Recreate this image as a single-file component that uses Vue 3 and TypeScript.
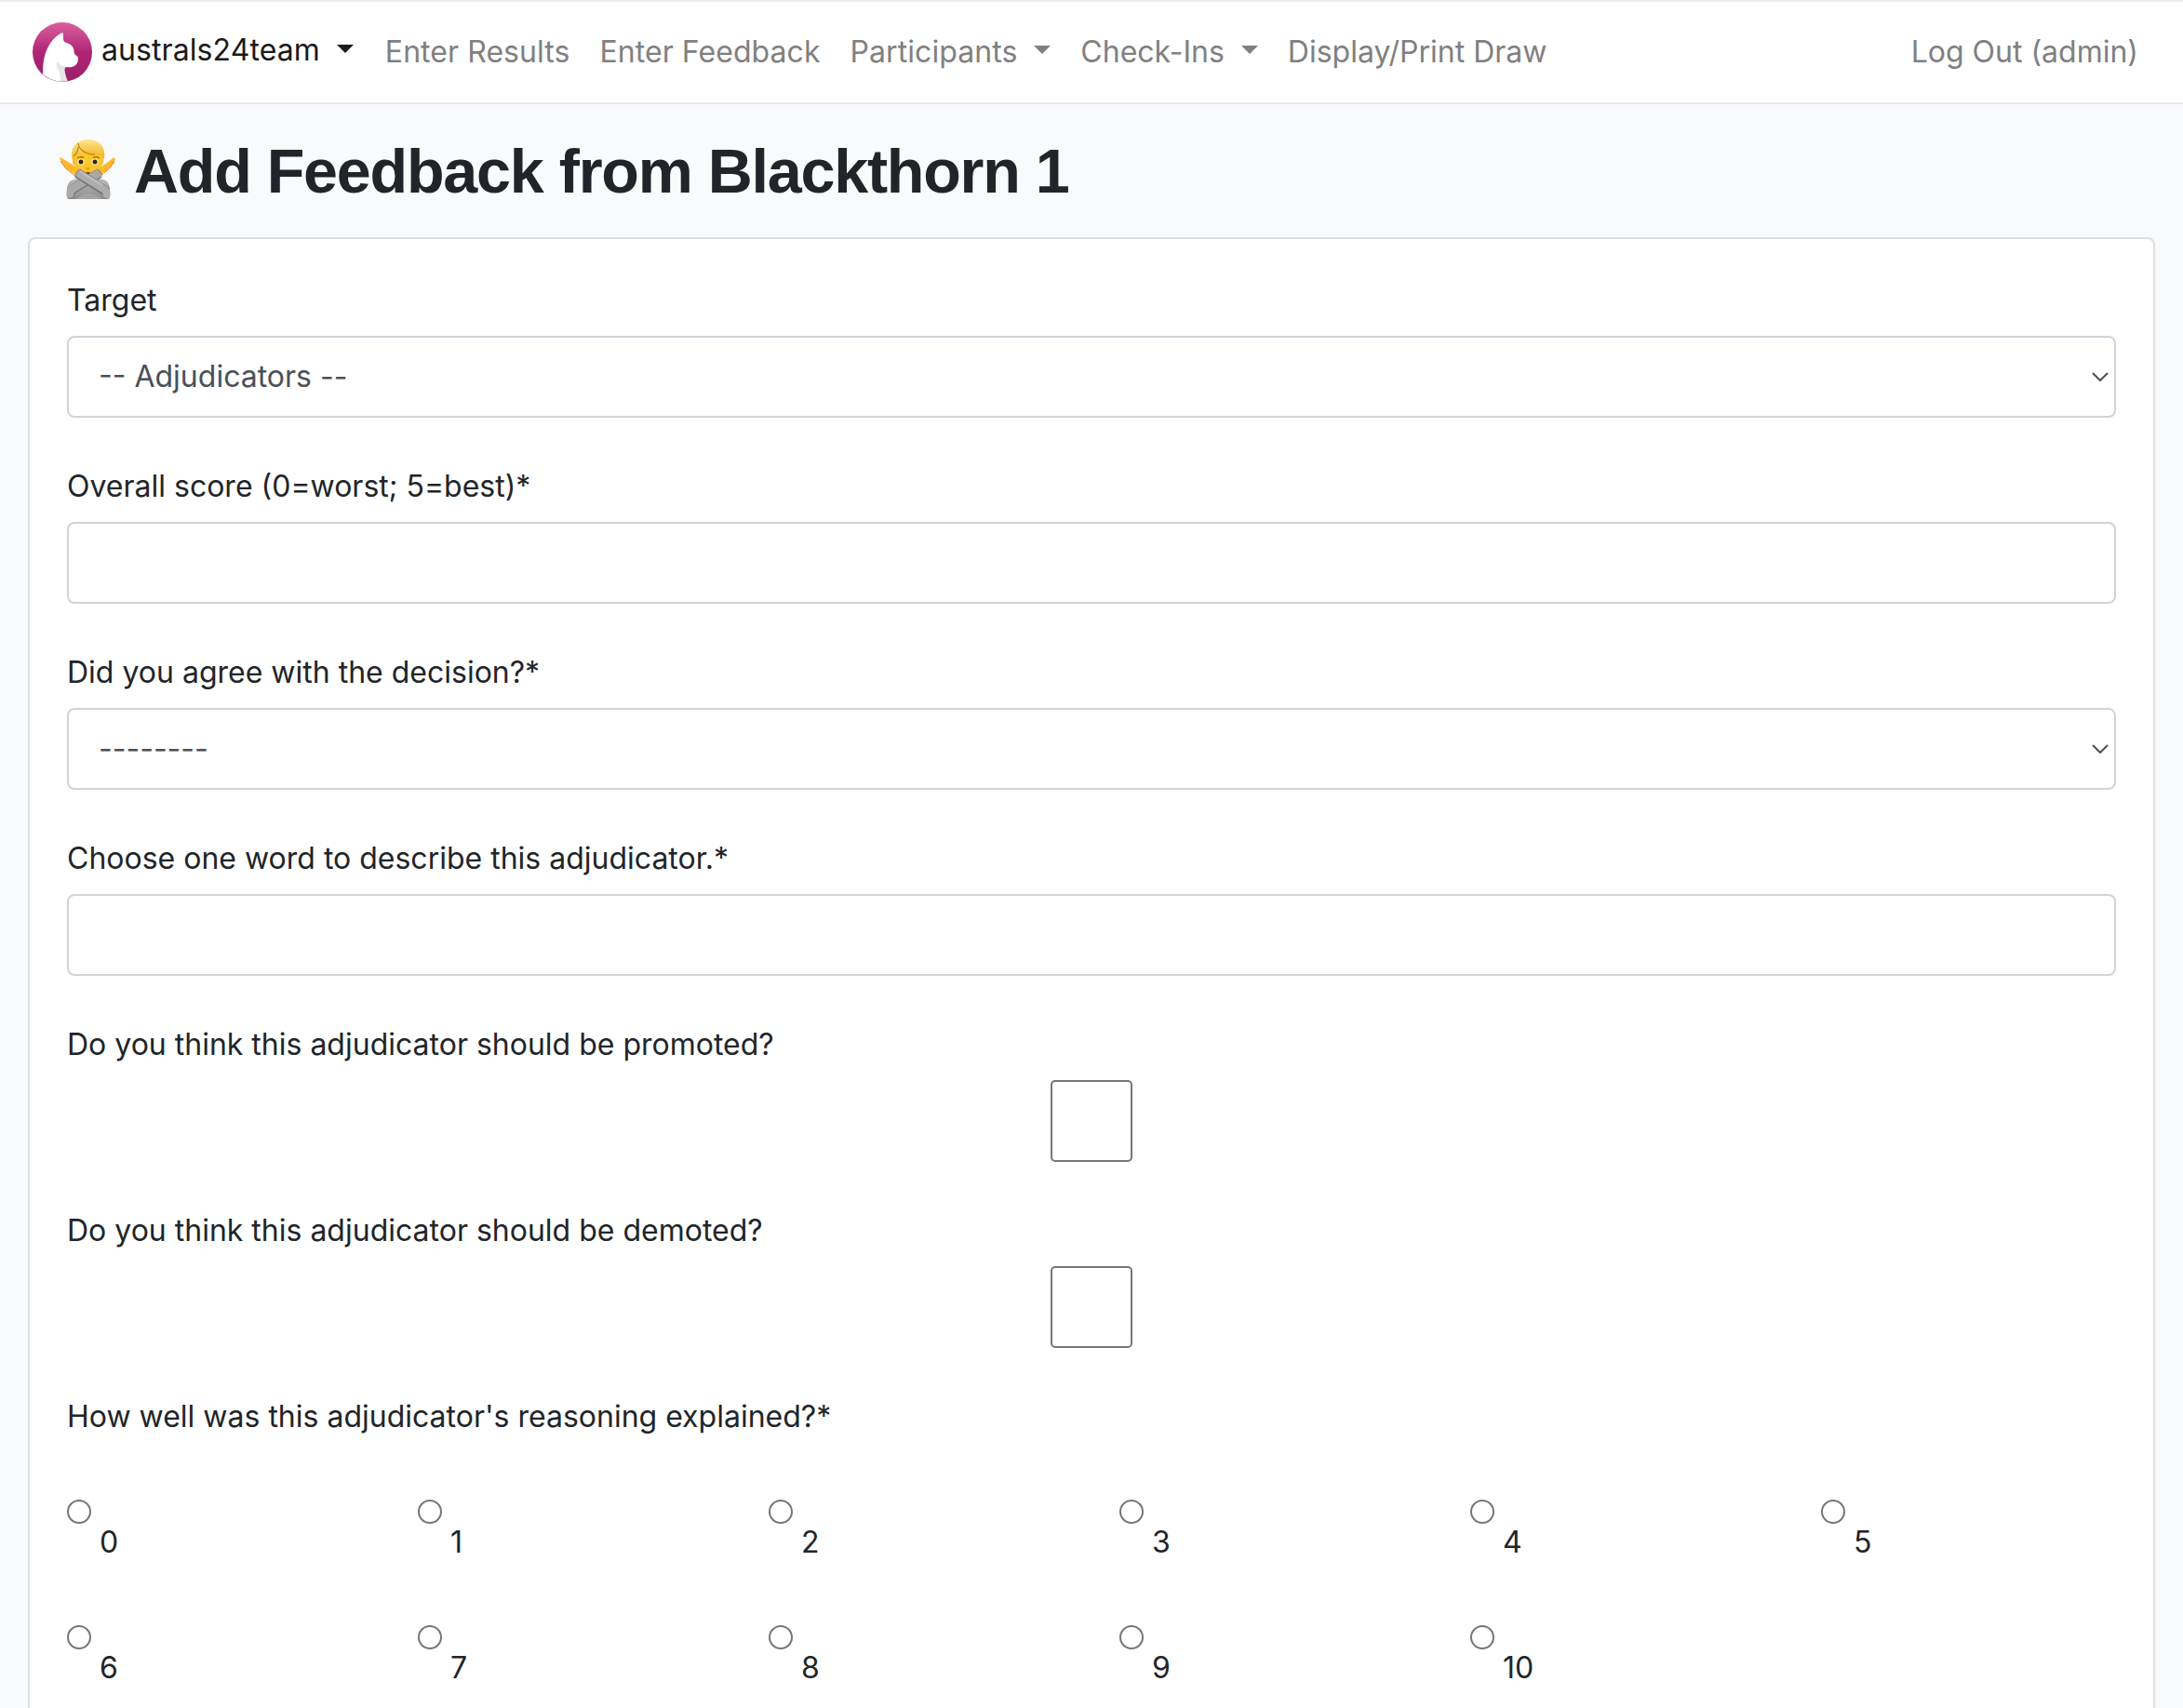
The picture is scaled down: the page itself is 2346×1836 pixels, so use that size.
<script setup lang="ts">
interface NavLink { label: string; caret?: boolean }
interface Field { label: string; kind: 'select' | 'text' | 'check'; value?: string }

const links: NavLink[] = [
  { label: 'Enter Results' },
  { label: 'Enter Feedback' },
  { label: 'Participants', caret: true },
  { label: 'Check-Ins', caret: true },
  { label: 'Display/Print Draw' },
]

const fields: Field[] = [
  { label: 'Target', kind: 'select', value: '-- Adjudicators --' },
  { label: 'Overall score (0=worst; 5=best)*', kind: 'text' },
  { label: 'Did you agree with the decision?*', kind: 'select', value: '--------' },
  { label: 'Choose one word to describe this adjudicator.*', kind: 'text' },
  { label: 'Do you think this adjudicator should be promoted?', kind: 'check' },
  { label: 'Do you think this adjudicator should be demoted?', kind: 'check' },
]

const scores: number[] = Array.from({ length: 11 }, (_, i) => i)
</script>

<template>
  <div class="page">
    <nav class="navbar">
      <a class="brand">
        <svg class="logo" viewBox="0 0 64 64" width="64" height="64">
          <defs>
            <linearGradient id="logoFill" x1="0" y1="0" x2="0" y2="1">
              <stop offset="0" stop-color="#d9609f" />
              <stop offset="0.5" stop-color="#b02574" />
              <stop offset="1" stop-color="#9c1d66" />
            </linearGradient>
            <clipPath id="logoClip"><circle cx="32" cy="32" r="31.7" /></clipPath>
          </defs>
          <circle cx="32" cy="32" r="32" fill="url(#logoFill)" />
          <g clip-path="url(#logoClip)">
            <path d="M24 41 L37 46 L34.500 50 Q34.500 55 38 64 L26 64Z" fill="#e6e6e6" />
            <path d="M11 58 C11 44 12 35 17 26 C20 20 26 13.500 32.500 11 C33.300 14 32.500 17 33.500 20 C36 23 41 22 43.500 27 C45 30 44 32 45.500 34.500 C47 36 49.500 36.500 49 39 C49 43 47 47 42 48 C38 49 29 47 27 42.500 C24.500 44 25.500 48 27.500 51 C30 55 30 60 30 66 L11 66Z" fill="#fff" />
          </g>
        </svg>
        <span>australs24team</span>
        <i class="caret"></i>
      </a>
      <a v-for="link in links" :key="link.label" class="link">
        {{ link.label }}<i v-if="link.caret" class="caret"></i>
      </a>
      <a class="link logout">Log Out (admin)</a>
    </nav>

    <h1 class="title">
      <svg class="emoji" viewBox="0 0 60 64" width="60" height="64">
        <defs>
          <linearGradient id="hair" x1="0" y1="0" x2="0" y2="1">
            <stop offset="0" stop-color="#ffe48a" /><stop offset="1" stop-color="#eeb01c" />
          </linearGradient>
          <linearGradient id="shirt" x1="0" y1="0" x2="0" y2="1">
            <stop offset="0" stop-color="#b9b9b9" /><stop offset="1" stop-color="#8e8e8e" />
          </linearGradient>
          <clipPath id="bust"><path d="M0 0 H60 V42 Q54 44 54 54 Q55 60 53 64 H9 Q7 60 8 54 Q8 44 14 41 L0 30Z" /></clipPath>
        </defs>
        <path d="M8 58 V54 Q8 43 19 42 H43 Q54 43 54 54 V58 Q54 64 50 64 H12 Q8 64 8 58Z" fill="url(#shirt)" />
        <path d="M13 19 C12 6 20 0 31 0 C42 0 49 7 48 19 L46 27 H15Z" fill="url(#hair)" />
        <path d="M16 17 Q31 10 46 18 V26 Q45 38 31 39 Q17 38 16 26Z" fill="#fdc62c" />
        <path d="M20 5 C21 12 29 17 39 16 C44 16 47 18 48 20 C50 8 43 1 31 .5 Q24 1 20 5Z" fill="url(#hair)" />
        <path d="M20 4 C21 12 29 16 38 16 M20 8 Q20 14 15 18" fill="none" stroke="#b97a10" stroke-width="1.100" />
        <path d="M19 20 Q22 17.500 26 19.500 M36 19.500 Q40 17.500 43 20" fill="none" stroke="#9b6210" stroke-width="1.200" />
        <ellipse cx="23" cy="24" rx="3.500" ry="3.300" fill="#fff5dd" /><ellipse cx="38" cy="24" rx="3.500" ry="3.300" fill="#fff5dd" />
        <circle cx="23" cy="24" r="2.500" fill="#3b2310" /><circle cx="38" cy="24" r="2.500" fill="#3b2310" />
        <path d="M28.500 30.500 Q30.500 32 32.500 30.500" fill="none" stroke="#d88a10" stroke-width="1.300" />
        <path d="M26 37 Q30.500 33 35 37Z" fill="#7a3410" />
        <path d="M17 41 L14 36 Q3 29 0 20 Q1 18 4 21 L19 30 L23 34Z" fill="#fdb92a" />
        <path d="M45 40 L48 35 Q57 29 60 21 Q58 18 56 21 L44 30 L39 34Z" fill="#fdb92a" />
        <path d="M1 23 Q5 31 14 37 M59 23 Q56 30 48 36" fill="none" stroke="#e07b2a" stroke-width="1" />
        <g fill="none" clip-path="url(#bust)">
          <path d="M43 36 L15 53 Q9 57 11 64" stroke="#7d7d7d" stroke-width="10.500" />
          <path d="M43 35.500 L15 52 Q9 56 11 63" stroke="#a9a9a9" stroke-width="8.500" />
          <path d="M19 36 L47 54 Q54 58 51 64" stroke="#777" stroke-width="10.500" />
          <path d="M19 35.500 L47 53 Q53 57 50 63" stroke="#adadad" stroke-width="8" />
          <path d="M22 34 L46 49" stroke="#bdbdbd" stroke-width="2.500" />
        </g>
        <path d="M16 39 L21 32 M41 32 L46 38" stroke="#8a8a8a" stroke-width="1.200" />
        <path d="M18 64 Q31 52 45 64Z" fill="#a3a3a3" />
      </svg>
      <span>Add Feedback from Blackthorn 1</span>
    </h1>

    <form class="card">
      <div v-for="f in fields" :key="f.label" class="group">
        <label class="label">{{ f.label }}</label>
        <div v-if="f.kind === 'check'" class="check"></div>
        <div v-else class="control">
          <span>{{ f.value }}</span>
          <svg v-if="f.kind === 'select'" class="chevron" viewBox="0 0 18 10" width="18" height="10">
            <path d="M1 1 L9 9 L17 1" fill="none" stroke="#495057" stroke-width="2" />
          </svg>
        </div>
      </div>
      <div class="group">
        <label class="label">How well was this adjudicator's reasoning explained?*</label>
        <div class="scores">
          <label v-for="n in scores" :key="n" class="score">
            <i class="radio"></i><span>{{ n }}</span>
          </label>
        </div>
      </div>
    </form>
  </div>
</template>

<style>
body { margin: 0; background: #f9fafc; overflow: hidden; }
</style>

<style scoped>
* { box-sizing: border-box; }
.page {
  height: 1836px;
  overflow: hidden;
  background: #f9fafc;
  color: #212529;
  font-family: Inter, "Liberation Sans", sans-serif;
  font-size: 32px;
  line-height: 48px;
}
.navbar {
  display: flex;
  align-items: center;
  height: 112px;
  padding: 0 48px 0 35px;
  background: #fff;
  border-top: 2px solid #e9e9ef;
  border-bottom: 2px solid #e9e9ef;
}
.brand { display: flex; align-items: center; color: #1a1a1a; margin-right: 34px; padding-bottom: 4px; }
.brand span { margin-left: 10px; letter-spacing: 0.08px; }
.brand .caret { margin-left: 18px; margin-bottom: 4px; }
.logo { display: block; margin-top: 4px; }
.link { display: flex; align-items: center; color: #808080; margin-right: 32px; letter-spacing: 0.06px; white-space: nowrap; }
.link + .link + .link + .link { letter-spacing: 0; }
.link.logout { margin: 0 0 0 auto; }
.caret {
  width: 18px;
  margin-left: 18px;
  margin-bottom: 5px;
  border: 9px solid transparent;
  border-top-color: currentColor;
  border-bottom: 0;
}
.title {
  display: flex;
  align-items: center;
  height: 143px;
  margin: 0;
  padding: 0 0 3px 64px;
  font-family: "Liberation Sans", sans-serif;
  font-size: 66.5px;
  line-height: 77px;
  font-weight: 700;
  letter-spacing: -1.25px;
}
.title span { margin: 4px 0 0 20px; white-space: nowrap; }
.card {
  margin: 0 30px;
  height: 1700px;
  padding: 42px 40px 0;
  background: #fff;
  border: 2px solid #dfdfdf;
  border-radius: 8px;
}
.group { height: 200px; }
.label { display: block; height: 62px; }
.control {
  display: flex;
  align-items: center;
  justify-content: space-between;
  height: 88px;
  padding: 0 6px 0 32px;
  border: 2px solid #ced4da;
  border-radius: 8px;
  color: #495057;
}
.check {
  width: 88px;
  height: 88px;
  margin: 0 auto;
  border: 2px solid #767676;
  border-radius: 5px;
}
.scores {
  display: grid;
  grid-template-columns: repeat(6, 377px);
  grid-auto-rows: 135px;
  margin-right: -60px;
  padding-top: 51px;
}
.score { display: flex; align-items: flex-start; }
.score span { margin: 22px 0 0 9px; }
.radio { width: 26px; height: 26px; border: 2px solid #767676; border-radius: 50%; }
</style>
